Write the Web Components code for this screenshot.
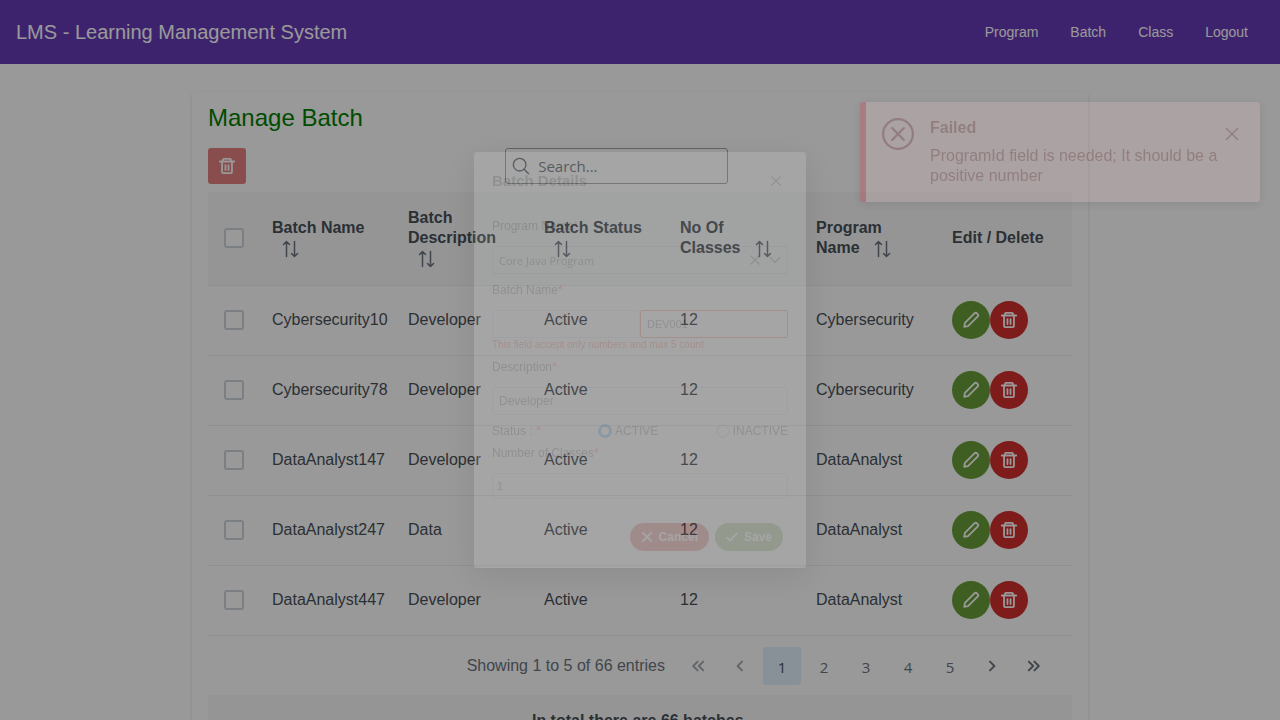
<!DOCTYPE html>
<html lang="en">
<head>
<meta charset="utf-8">
<title>LMS - Manage Batch</title>
<style>
  html { background: #fff; }
  body {
    margin: 0;
    overflow: hidden;
    font-family: "Liberation Sans", Arial, sans-serif;
    font-size: 16px;
    line-height: 20px;
    color: #495057;
  }
  lms-card { margin: 28px auto 16px; }
</style>
</head>
<body>
<lms-navbar heading="LMS - Learning Management System">
  <a href="#program">Program</a>
  <a href="#batch">Batch</a>
  <a href="#class">Class</a>
  <a href="#logout">Logout</a>
</lms-navbar>
<lms-card heading="Manage Batch">
  <batch-toolbar></batch-toolbar>
  <batch-table></batch-table>
  <lms-paginator></lms-paginator>
  <table-summary>In total there are 66 batches.</table-summary>
</lms-card>
<modal-mask><batch-dialog></batch-dialog></modal-mask>
<lms-toast heading="Failed">ProgramId field is needed; It should be a positive number</lms-toast>

<script>
const ICONS = {
  trash: '<path d="M2 5h16M4.500 5.500v11.200c0 .8.5 1.300 1.300 1.300h8.400c.8 0 1.300-.5 1.300-1.300V5.500M5.500 4.500V3.300c0-.8.5-1.300 1.300-1.300h6.400c.8 0 1.300.5 1.300 1.300v1.200M8.300 9v5.500M11.700 9v5.500"/>',
  pencil: '<path d="M2.500 17.500l.7-4.200L13.800 2.700c1-1 2-.9 2.800-.1l.8.8c.8.800.9 1.800-.1 2.800L6.700 16.800z"/>',
  search: '<circle cx="8.500" cy="8.500" r="7"/><path d="M13.500 13.500L18.500 18.500"/>',
  sort: '<path d="M6.500 17.500V2.500M3.500 5.500l3-3 3 3M14.500 2.500v15M11.500 14.500l3 3 3-3"/>',
  times: '<path d="M3 3l14 14M17 3L3 17"/>',
  check: '<path d="M2 11l5 5L18 4"/>',
  down: '<path d="M2 6l8 8 8-8"/>',
  circle: '<circle cx="10" cy="10" r="9.300"/><path d="M6.300 6.300l7.400 7.400M13.700 6.300l-7.400 7.400"/>',
  first: '<path d="M9.500 4.500L4 10l5.500 5.500M16.500 4.500L11 10l5.500 5.500"/>',
  prev: '<path d="M12.500 4.500L7 10l5.500 5.500"/>',
  next: '<path d="M7.500 4.500L13 10l-5.500 5.500"/>',
  last: '<path d="M3.500 4.500L9 10l-5.500 5.500M10.500 4.500L16 10l-5.500 5.500"/>'
};

/* Every component renders its template into an open shadow root. */
class Base extends HTMLElement {
  connectedCallback() {
    if (this.shadowRoot) return;
    this.attachShadow({ mode: 'open' }).innerHTML =
      '<style>*{box-sizing:border-box}button,input,textarea,select{font:inherit;color:inherit}' +
      this.styles() + '</style>' + this.markup();
  }
}

customElements.define('lms-icon', class extends Base {
  styles() {
    return `:host{display:inline-block;width:16px;height:16px;line-height:0}
      svg{width:100%;height:100%;fill:none;stroke:currentColor;stroke-width:var(--stroke,2);stroke-linecap:round;stroke-linejoin:round}`;
  }
  markup() { return `<svg viewBox="0 0 20 20" aria-hidden="true">${ICONS[this.getAttribute('name')]}</svg>`; }
});

customElements.define('lms-navbar', class extends Base {
  styles() {
    return `:host{display:block}
      header{display:flex;align-items:center;justify-content:space-between;height:64px;padding:0 16px;background:#673ab7;color:#fff}
      h1{margin:0;font-size:20px;font-weight:400;line-height:32px}
      nav{display:flex;font-size:14px}
      ::slotted(a){padding:8px 16px;color:#fff;text-decoration:none}`;
  }
  markup() { return `<header><h1>${this.getAttribute('heading')}</h1><nav><slot></slot></nav></header>`; }
});

customElements.define('lms-card', class extends Base {
  styles() {
    return `:host{display:block;box-sizing:border-box;width:70%;padding:12px 16px 16px;border-radius:4px;background:#fff;
        box-shadow:0 2px 1px -1px rgba(0,0,0,.2),0 1px 1px rgba(0,0,0,.14),0 1px 3px rgba(0,0,0,.12)}
      h2{margin:0 0 16px;font-size:24px;font-weight:400;line-height:28px;color:green}`;
  }
  markup() { return `<h2>${this.getAttribute('heading')}</h2><slot></slot>`; }
});

customElements.define('batch-toolbar', class extends Base {
  styles() {
    return `:host{display:flex;margin-bottom:8px}
      button{display:grid;place-items:center;width:38px;height:36px;padding:0;border:0;border-radius:3px;background:#d32f2f;color:#fff;opacity:.6}
      lms-icon{width:18px;height:18px}
      label{display:flex;align-items:center;gap:8px;width:223px;height:36px;margin-left:30%;padding:0 7px 0 6px;border:1px solid #a6a6a6;border-radius:3px}
      input{width:100%;min-width:0;padding:0;border:0;outline:0;background:none;font:15px "Open Sans",sans-serif}
      input::placeholder{color:#6c757d;opacity:1}
      label lms-icon{flex:none;color:#6c757d;--stroke:1.500}`;
  }
  markup() {
    return `<button disabled aria-label="Delete selected"><lms-icon name="trash"></lms-icon></button>
      <label><lms-icon name="search"></lms-icon><input type="text" placeholder="Search..." aria-label="Search"></label>`;
  }
});

const BATCHES = [
  ['Cybersecurity10', 'Developer', 'Active', 12, 'Cybersecurity'],
  ['Cybersecurity78', 'Developer', 'Active', 12, 'Cybersecurity'],
  ['DataAnalyst147', 'Developer', 'Active', 12, 'DataAnalyst'],
  ['DataAnalyst247', 'Data', 'Active', 12, 'DataAnalyst'],
  ['DataAnalyst447', 'Developer', 'Active', 12, 'DataAnalyst']
];

customElements.define('batch-table', class extends Base {
  styles() {
    return `:host{display:block}
      table{width:100%;table-layout:fixed;border-collapse:separate;border-spacing:0;text-align:left}
      th,td{padding:16px;border-bottom:1px solid #eef0f2;vertical-align:middle}
      th{height:93px;background:#f8f9fa;font-weight:700}
      td{height:70px;padding-block:0}
      th:first-child,td:first-child{width:48px}
      th lms-icon{width:20px;height:20px;margin-left:8px;vertical-align:middle;color:#6c757d;--stroke:1.500}
      input{display:block;appearance:none;width:20px;height:20px;margin:0;border:2px solid #ced4da;border-radius:3px;background:#fff}
      .actions{display:flex}
      button{display:grid;place-items:center;width:38px;height:38px;padding:0;border:0;border-radius:50%;background:#689f38;color:#fff}
      button.delete{background:#d32f2f}
      button lms-icon{width:18px;height:18px}`;
  }
  markup() {
    const heads = ['Batch Name', 'Batch Description', 'Batch Status', 'No Of Classes', 'Program Name'];
    return `<table><thead><tr><th><input type="checkbox" aria-label="Select all"></th>
      ${heads.map(h => `<th scope="col">${h} <lms-icon name="sort"></lms-icon></th>`).join('')}
      <th scope="col">Edit / Delete</th></tr></thead><tbody>
      ${BATCHES.map(b => `<tr><td><input type="checkbox" aria-label="Select ${b[0]}"></td>
        ${b.map(v => `<td>${v}</td>`).join('')}
        <td><div class="actions"><button aria-label="Edit"><lms-icon name="pencil"></lms-icon></button><button class="delete" aria-label="Delete"><lms-icon name="trash"></lms-icon></button></div></td></tr>`).join('')}
      </tbody></table>`;
  }
});

customElements.define('lms-paginator', class extends Base {
  styles() {
    return `:host{display:flex;justify-content:flex-end;align-items:center;gap:4px;padding:11px 19px 10px;color:#6c757d}
      span{margin-right:10px}
      button{display:grid;place-items:center;width:38px;height:38px;padding:2px 0 0;border:0;border-radius:3px;background:none;font:15px "Open Sans",sans-serif}
      button.icon{padding:0}
      button[aria-current]{background:#e3f2fd;color:#495057}
      button:disabled{opacity:.6}
      lms-icon{--stroke:2.400}`;
  }
  markup() {
    const icon = (n, d = '') => `<button class="icon" ${d} aria-label="${n} page"><lms-icon name="${n}"></lms-icon></button>`;
    return `<span>Showing 1 to 5 of 66 entries</span>${icon('first', 'disabled')}${icon('prev', 'disabled')}
      <button aria-current="page">1</button><button>2</button><button>3</button><button>4</button><button>5</button>
      ${icon('next')}${icon('last')}`;
  }
});

customElements.define('table-summary', class extends Base {
  styles() {
    return `:host{display:block;padding:16px;border-bottom:1px solid #e9ecef;background:#f8f9fa;font-weight:700;text-align:center}`;
  }
  markup() { return '<slot></slot>'; }
});

customElements.define('modal-mask', class extends Base {
  styles() {
    return `:host{position:fixed;inset:0;display:flex;align-items:center;justify-content:center;background:rgba(0,0,0,.4)}`;
  }
  markup() { return '<slot></slot>'; }
});

customElements.define('batch-dialog', class extends Base {
  styles() {
    return `:host{display:block;width:332px;box-sizing:border-box;border-radius:3px;background:#fff;opacity:.12;
        box-shadow:0 8px 32px 4px rgba(0,0,0,.6);font-size:12px;line-height:16px}
      header{display:flex;align-items:center;justify-content:space-between;height:58px;padding:0 24px 0 18px}
      h2{margin:0;font-size:15px;line-height:20px}
      form{display:flex;flex-direction:column;padding:8px 18px 17px}
      lms-icon{width:12px;height:12px}
      header button{display:grid;padding:0;border:0;background:none}
      i{color:#f44336;font-style:normal}
      .field{display:flex;flex-direction:column;gap:12px;margin-bottom:8px}
      .box{width:100%;height:28px;padding:0 6px;border:1px solid #ced4da;border-radius:2px;background:none;outline:0}
      .combo{display:flex;align-items:center;gap:8px}
      select{flex:1;appearance:none;padding:0;border:0;background:none;font:11px "Open Sans",sans-serif}
      .pair{display:flex}
      .pair .box{font-size:11px}
      .pair .box[aria-invalid]{border-color:#f44336}
      .error{margin:-11px 0 0;font-size:10px;line-height:12px;color:#f44336}
      fieldset{display:flex;justify-content:space-between;align-items:center;margin:0 0 6px;padding:0;border:0}
      fieldset label{display:flex;align-items:center;gap:3px}
      input[type=radio]{appearance:none;width:14px;height:14px;margin:0;border:2px solid #ced4da;border-radius:50%}
      input[type=radio]:checked{border:3px solid #2196f3}
      .last{margin-bottom:24px}
      .last .box{height:26px;padding:0 4px;font-size:11px}
      footer{display:flex;justify-content:flex-end;gap:6px;padding-right:5px}
      footer button{display:flex;align-items:center;gap:6px;height:28px;padding:0 11px;border:0;border-radius:14px;background:#d32f2f;color:#fff;font-weight:700}
      footer .save{background:#689f38}
      footer lms-icon{--stroke:3}`;
  }
  markup() {
    return `<header><h2>Batch Details</h2><button aria-label="Close"><lms-icon name="times"></lms-icon></button></header>
    <form>
      <div class="field"><label for="program">Program Name<i>*</i></label>
        <div class="box combo"><select id="program"><option>Core Java Program</option></select><lms-icon name="times"></lms-icon><lms-icon name="down"></lms-icon></div></div>
      <div class="field"><label for="name">Batch Name<i>*</i></label>
        <div class="pair"><input class="box" aria-label="Batch prefix"><input class="box" id="name" aria-invalid="true" value="DEV001"></div>
        <p class="error">This field accept only numbers and max 5 count</p></div>
      <div class="field"><label for="description">Description<i>*</i></label><input class="box" id="description" value="Developer"></div>
      <fieldset aria-label="Status"><span>Status : <i>*</i></span>
        <label><input type="radio" name="status" checked>ACTIVE</label>
        <label><input type="radio" name="status">INACTIVE</label></fieldset>
      <div class="field last"><label for="classes">Number of Classes<i>*</i></label><input class="box" id="classes" value="1"></div>
      <footer><button type="button"><lms-icon name="times"></lms-icon>Cancel</button><button type="button" class="save"><lms-icon name="check"></lms-icon>Save</button></footer>
    </form>`;
  }
});

customElements.define('lms-toast', class extends Base {
  styles() {
    return `:host{position:fixed;top:102px;right:20px;display:flex;align-items:flex-start;box-sizing:border-box;width:400px;
        padding:16px;border-left:6px solid #e60017;border-radius:3px;background:#ffcdd2;color:#73000c;opacity:.18;
        box-shadow:0 2px 8px rgba(0,0,0,.5)}
      .status{flex:none;width:32px;height:32px;margin-right:16px;--stroke:1.400}
      div{flex:1}
      strong{display:block;margin-bottom:8px}
      p{margin:0}
      button{display:grid;place-items:center;flex:none;width:24px;height:32px;padding:0;border:0;background:none}
      button lms-icon{--stroke:1.800}`;
  }
  markup() {
    return `<lms-icon class="status" name="circle"></lms-icon><div><strong>${this.getAttribute('heading')}</strong><p><slot></slot></p></div>
      <button aria-label="Dismiss"><lms-icon name="times"></lms-icon></button>`;
  }
});
</script>
</body>
</html>
